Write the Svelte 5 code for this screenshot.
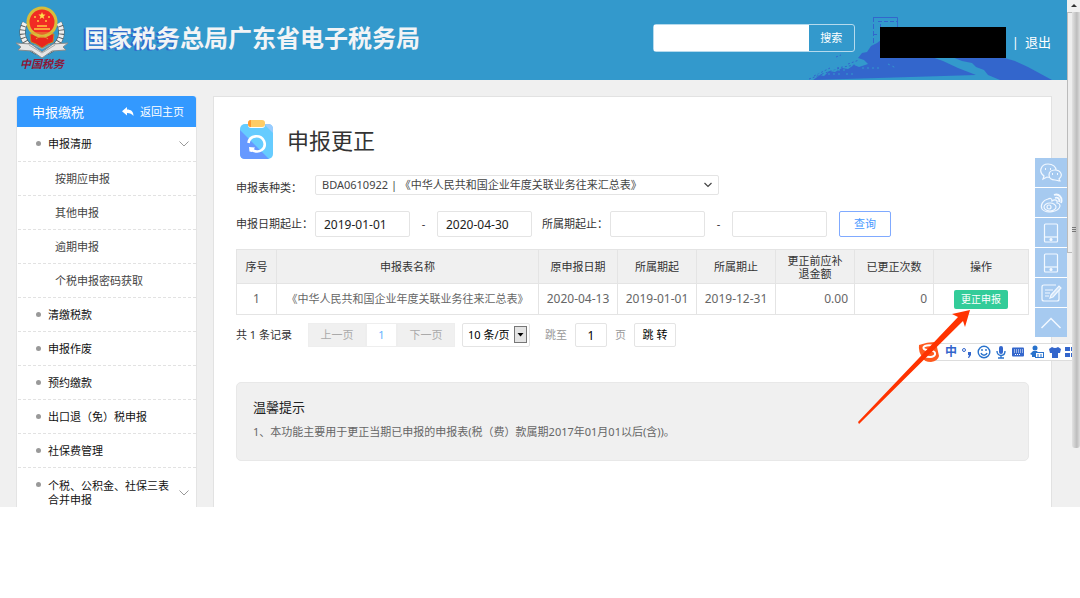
<script>
    let keyword = $state("");
    let reportType = $state("BDA0610922");
    let declareFrom = $state("2019-01-01");
    let declareTo = $state("2020-04-30");
    let periodFrom = $state("");
    let periodTo = $state("");
    let pageSize = $state("10");
    let jumpPage = $state("1");

    const menu = [
        { name: "申报清册", open: true },
        { name: "按期应申报", sub: true },
        { name: "其他申报", sub: true },
        { name: "逾期申报", sub: true },
        { name: "个税申报密码获取", sub: true },
        { name: "清缴税款" },
        { name: "申报作废" },
        { name: "预约缴款" },
        { name: "出口退（免）税申报" },
        { name: "社保费管理" },
        { name: "个税、公积金、社保三表合并申报", open: true },
    ];

    const rows = [
        {
            name: "《中华人民共和国企业年度关联业务往来汇总表》",
            declared: "2020-04-13",
            from: "2019-01-01",
            to: "2019-12-31",
            amount: "0.00",
            count: 0,
        },
    ];

    const tools = ["微信", "微博", "手机端", "移动办税", "意见反馈", "返回顶部"];
</script>

<div class="screen">
    <div class="page">
        <header>
            <svg class="skyline" width="260" height="66" viewBox="0 0 260 66" aria-hidden="true">
                <g fill="none" stroke="#3366cc">
                    <path d="M67.500 29V3.500" stroke-dasharray="5 2" />
                    <path d="M67 3.500H91.500V14" />
                    <path d="M72 7.500h19M74.500 10v14M67 20.500h5" stroke-dasharray="4 2" />
                    <path d="M3 65l14-5M8 62l16-8M16 60l18-6M31 54l18-3M42 50l11-4M30 43l5-2" stroke-dasharray="2 2" />
                </g>
                <path fill="#3366cc" d="M7 66l7-5 4 1 5-5 6 1 7-4 6 1 6-4 5 2 9-3-4-4-6-2 4-5 5-1 4-6 6-3 4-3 12 1 26 13 10 2 14 5 15 7 18 7z" />
                <path fill="#3366cc" d="M146 43h49l14 4 13 6 24 13h-52l-12-5-4-5-8-3-4-4-10-2z" />
                <path d="M12 60h22M22 56h20M56 54h20M82 50l8 4M40 60h10" stroke="#3399cc" stroke-dasharray="2 3" />
            </svg>
            <div class="brand">
                <div class="emblem">
                    <svg width="52" height="52" viewBox="0 0 52 52" aria-hidden="true">
                        <path d="M9 17C3 28 8 39 21 46M43 17c6 11 1 22-12 29" fill="none" stroke="#555b5d" stroke-width="6" />
                        <path d="M9 17C3 28 8 39 21 46M43 17c6 11 1 22-12 29" fill="none" stroke="#eee" stroke-width="5" stroke-dasharray="3 1" />
                        <path d="M0 37l15 1 11 8 11-8 15-1-5 4 3 3-14 1-10 7-10-7-14-1 3-3z" fill="#e6e6e6" stroke="#858b8d" />
                        <path d="M14 28h24l-1 8-5 2-6 4-6-4-5-2z" fill="#e8271d" stroke="#bd8b28" />
                        <circle cx="26" cy="16" r="14" fill="#f12b24" stroke="#d8bd3a" stroke-width="3" />
                        <path d="M26 6l1 2.500h2.500l-2 2 .800 2.500-2.300-1.500-2.300 1.500.800-2.500-2-2H25z" fill="#ffdf4b" />
                        <path d="M18 11h2M32 11h2M21 15h2M29 15h2M21 20h10M18 23h16" stroke="#ffc840" stroke-width="1.600" fill="none" />
                        <path d="M15 27h22M20 33c3-3 9-3 12 0" stroke="#e0a030" fill="none" />
                        <path d="M13 39l13 8 13-8M18 39l8 4 8-4" fill="none" stroke="#a7adae" />
                    </svg>
                    <span>中国税务</span>
                </div>
                <h1><span>国家税务</span>总局广东省电子税务局</h1>
            </div>
            <form class="search">
                <input type="text" aria-label="搜索内容" bind:value={keyword} />
                <button type="button">搜索</button>
            </form>
            <div class="user">
                <span class="account"></span>
                <span>|</span>
                <a href="#logout">退出</a>
            </div>
        </header>

        <div class="body">
            <aside>
                <div class="side-title">
                    <span>申报缴税</span>
                    <a href="#home">
                        <svg width="12" height="10" viewBox="0 0 12 10" aria-hidden="true">
                            <path d="M5 0v2.500c4 0 6.500 2 6.500 6.500C10 7 8 6 5 6v2.500L0 4.200z" fill="#fff" />
                        </svg>
                        返回主页
                    </a>
                </div>
                <ul>
                    {#each menu as item}
                        <li class:sub={item.sub}>
                            <a href="#menu">{item.name}</a>
                            {#if item.open}
                                <svg width="10" height="6" viewBox="0 0 10 6" aria-hidden="true">
                                    <path d="M.5 .5L5 5 9.500 .5" fill="none" stroke="#999" />
                                </svg>
                            {/if}
                        </li>
                    {/each}
                </ul>
            </aside>

            <main>
                <div class="heading">
                    <svg width="33" height="39" viewBox="0 0 33 39" aria-hidden="true">
                        <rect y="4" width="33" height="35" rx="5" fill="#66ccff" />
                        <path d="M0 10l29 29H5q-5 0-5-5z" fill="#6699ff" />
                        <path d="M24 4h4q5 0 5 5v4z" fill="#99ccff" />
                        <path d="M8 4h17v1q0 3-3 3H11q-3 0-3-3z" fill="#fff" />
                        <rect x="8" width="17" height="7" rx="3" fill="#ffcc66" />
                        <path d="M11 0q-3 0-3 3.500T11 7z" fill="#ff9933" />
                        <path d="M8.500 23c1-8 12-9 15.500-2 3 8-5 13-12 9" fill="none" stroke="#fff" stroke-width="2.600" />
                        <path d="M9 27l6 .500-3 4.500-2.500-.500z" fill="#fff" />
                    </svg>
                    <h2>申报更正</h2>
                </div>

                <div class="filter kind">
                    <label class="lead" for="type">申报表种类：</label>
                    <div class="type">
                        <select id="type" bind:value={reportType}>
                            <option value="BDA0610922">BDA0610922 | 《中华人民共和国企业年度关联业务往来汇总表》</option>
                        </select>
                        <svg width="10" height="6" viewBox="0 0 10 6" aria-hidden="true">
                            <path d="M1.500 1L5 4.500 8.500 1" fill="none" stroke="#444" stroke-width="1.200" />
                        </svg>
                    </div>
                </div>
                <div class="filter dates">
                    <label class="lead" for="from">申报日期起止：</label>
                    <input id="from" type="text" bind:value={declareFrom} />
                    <span class="dash">-</span>
                    <input type="text" aria-label="申报日期止" bind:value={declareTo} />
                    <label class="second" for="period">所属期起止：</label>
                    <input id="period" type="text" bind:value={periodFrom} />
                    <span class="dash">-</span>
                    <input type="text" aria-label="所属期止" bind:value={periodTo} />
                    <button class="query" type="button">查询</button>
                </div>

                <table>
                    <colgroup>
                        <col class="no" />
                        <col />
                        <col class="data" />
                        <col class="data" />
                        <col class="data" />
                        <col class="data" />
                        <col class="data" />
                        <col class="action" />
                    </colgroup>
                    <thead>
                        <tr>
                            <th>序号</th>
                            <th>申报表名称</th>
                            <th>原申报日期</th>
                            <th>所属期起</th>
                            <th>所属期止</th>
                            <th>更正前应补<br />退金额</th>
                            <th>已更正次数</th>
                            <th>操作</th>
                        </tr>
                    </thead>
                    <tbody>
                        {#each rows as row, i}
                            <tr>
                                <td>{i + 1}</td>
                                <td class="name">{row.name}</td>
                                <td>{row.declared}</td>
                                <td>{row.from}</td>
                                <td>{row.to}</td>
                                <td class="num">{row.amount}</td>
                                <td class="num">{row.count}</td>
                                <td><button class="fix" type="button">更正申报</button></td>
                            </tr>
                        {/each}
                    </tbody>
                </table>

                <div class="pager">
                    <span class="total">共 {rows.length} 条记录</span>
                    <div class="pages">
                        <button type="button">上一页</button>
                        <button type="button" class="current">1</button>
                        <button type="button">下一页</button>
                    </div>
                    <div class="size">
                        <select aria-label="每页条数" bind:value={pageSize}>
                            <option value="10">10 条/页</option>
                        </select>
                        <svg width="13" height="17" viewBox="0 0 13 17" aria-hidden="true">
                            <rect x=".5" y=".5" width="12" height="16" fill="#e4e4e4" stroke="#777" />
                            <path d="M3.500 7h6l-3 3.500z" />
                        </svg>
                    </div>
                    <label for="jump">跳至</label>
                    <input id="jump" type="text" bind:value={jumpPage} />
                    <span class="unit">页</span>
                    <button class="go" type="button">跳 转</button>
                </div>

                <section class="tips">
                    <h3>温馨提示</h3>
                    <p>1、本功能主要用于更正当期已申报的申报表(税（费）款属期2017年01月01以后(含))。</p>
                </section>
            </main>
        </div>

        <nav class="tools">
            {#each tools as tool, i}
                <button type="button" aria-label={tool}>
                    <svg width="24" height="24" viewBox="0 0 24 24" fill="none" stroke="#f2f8ff" stroke-width="1.200" aria-hidden="true">
                        {#if i === 0}
                            <path d="M11 16.500l-3-.5L4 18l1-3C-1 11 2 3 9 3c5 0 8 3 8 6" />
                            <path d="M16 9c-8 0-8 10 0 10 2 0 3 1 5 1l-1-2c5-4 1-9-4-9z" />
                            <path d="M6 8h1M11 8h1M13 13h1M18 13h1" stroke-width="2" />
                        {:else if i === 1}
                            <path d="M9 8C4 9 1 14 3 18c4 5 17 3 18-3 0-2-2-3-3-3 1-3-2-4-5-2 0-3-2-3-4-2z" />
                            <ellipse cx="11" cy="16" rx="6" ry="4" />
                            <circle cx="10" cy="16" r="2" />
                            <path d="M15 4c5-2 9 3 7 8M16 7c3-1 5 1 4 4" stroke-width="1.800" />
                        {:else if i === 2 || i === 3}
                            <rect x="5.500" y="3" width="13" height="18" rx="1" />
                            <path d="M6 16h12" />
                            <circle cx="12" cy="18.500" r="1" fill="#fff" />
                        {:else if i === 4}
                            <path d="M17 4H5q-2 0-2 2v12q0 2 2 2h13q2 0 2-2V9M6 9h8M6 12h5M6 15h4" />
                            <path d="M12 14l8-9 2 2-8 9-3 1z" fill="#cce1f8" />
                        {:else}
                            <path d="M2.500 17L12 7.500l9.500 9.500" stroke-width="1.500" />
                        {/if}
                    </svg>
                </button>
            {/each}
        </nav>
    </div>

    <div class="scroll" aria-hidden="true">
        <svg width="13" height="12" viewBox="0 0 13 12"><path d="M4 7l3-3 3 3z" fill="#333" /></svg>
        <div class="track">
            <div class="inner"></div>
            <div class="outer">
                <svg width="4" height="6" viewBox="0 0 4 6"><path d="M0 .5h4M0 2.500h4M0 4.500h4" stroke="#777" /></svg>
            </div>
        </div>
    </div>

    <!-- input method bar -->
    <div class="ime">
        <svg class="sogou" width="24" height="22" viewBox="0 0 24 22" aria-hidden="true">
            <path d="M2 4q8-3 16-3l2 5 2 9q-1 5-8 6-7 0-8-4Q1 11 2 4z" fill="#ff5a1f" />
            <path d="M18 5C8 3 5 6 7 8s10 0 11 4-5 5-11 3" fill="none" stroke="#fff" stroke-width="2" />
        </svg>
        <b>中</b>
        <svg width="12" height="14" viewBox="0 0 12 14" aria-hidden="true">
            <circle cx="3" cy="5" r="1.500" fill="none" stroke="#3366cc" />
            <path d="M7 7h3v3l-2 3H7l1-3H7z" fill="#3366cc" />
        </svg>
        <svg width="14" height="14" viewBox="0 0 14 14" fill="none" stroke="#2872cc" stroke-width="1.400" aria-hidden="true">
            <circle cx="7" cy="7" r="5.800" />
            <path d="M5 4v2M9 4v2M4 8c1 3 5 3 6 0" />
        </svg>
        <svg width="12" height="14" viewBox="0 0 12 14" aria-hidden="true">
            <rect x="4" y="1" width="4" height="8" rx="2" fill="#3366cc" />
            <path d="M2 6c0 6 8 6 8 0M6 10v3M3 13h6" fill="none" stroke="#2872cc" stroke-width="1.400" />
        </svg>
        <svg width="14" height="14" viewBox="0 0 14 14" aria-hidden="true">
            <rect x="1" y="2.500" width="12" height="9" rx="1" fill="#3366cc" />
            <path d="M3 5h9M3 7h9M4 9.500h6" stroke="#fff" stroke-dasharray="1 1" />
        </svg>
        <svg width="16" height="14" viewBox="0 0 16 14" aria-hidden="true">
            <circle cx="6" cy="3" r="2.500" fill="#2872cc" />
            <path d="M1 9l3-3h4l2 3v3H3v-2z" fill="#2872cc" />
            <rect x="6.500" y="7.500" width="8" height="5" fill="#fff" stroke="#2872cc" />
            <path d="M9 9v3M12 9v3" stroke="#2872cc" />
        </svg>
        <svg width="12" height="14" viewBox="0 0 12 14" aria-hidden="true">
            <path d="M3 2q3 2 6 0l3 2-1 4H9v5H3V8H1L0 4z" fill="#3366cc" />
        </svg>
        <svg width="7" height="14" viewBox="0 0 7 14" aria-hidden="true">
            <path d="M0 2h5v4H0zM0 8h5v4H0zM6 2h1v4H6zM6 8h1v4H6z" fill="#3366cc" />
        </svg>
    </div>

    <svg class="arrow" width="114" height="114" viewBox="0 0 114 114" aria-hidden="true">
        <path d="M0 112L100 7l-6-3 18-4-5 17-2-6L1 114z" fill="#ff3300" />
    </svg>
</div>

<style>
    :global(body) {
        background: #fff;
    }

    .screen {
        position: relative;
        display: flex;
        overflow: hidden;
        font: 11px/14px "Noto Sans", "Noto Sans CJK SC", sans-serif;
        color: #333;
    }

    .screen * {
        box-sizing: border-box;
    }

    h1, h2, h3, p, ul {
        margin: 0;
        padding: 0;
        font-weight: normal;
    }

    button, input, select {
        margin: 0;
        padding: 0;
        font: inherit;
        color: inherit;
        border: 1px solid #e4e4e4;
        border-radius: 2px;
        background: #fff;
        appearance: none;
    }

    a {
        color: inherit;
        text-decoration: none;
    }

    svg {
        display: block;
        flex: none;
    }

    .page {
        position: relative;
        flex: 1;
        min-width: 0;
        background: #f0f0f0;
    }

    header {
        position: relative;
        display: flex;
        align-items: center;
        height: 80px;
        padding: 0 16px 4px;
        background: #3399cc;
        color: #fff;
    }

    .skyline {
        position: absolute;
        right: 1px;
        bottom: 0;
    }

    .brand {
        display: flex;
        align-items: center;
        gap: 16px;
        margin-right: auto;
    }

    .emblem {
        display: flex;
        flex-direction: column;
        align-items: center;
    }

    .emblem span {
        font: italic bold 11px/13px "Liberation Serif", "Noto Sans CJK SC", serif;
        color: #8d1838;
    }

    h1 {
        font-size: 24px;
        font-weight: bold;
        line-height: 32px;
        color: #f2f4f6;
        white-space: nowrap;
    }

    h1 span {
        text-shadow: -2px 1px 0 #3366cc;
    }

    .search {
        position: relative;
        display: flex;
        height: 28px;
        border: 1px solid #b5daed;
        border-radius: 3px;
    }

    .search input {
        width: 155px;
        border: 0;
        border-radius: 0;
        color: #333;
    }

    .search button {
        width: 45px;
        border: 0;
        background: transparent;
    }

    .user {
        position: relative;
        display: flex;
        align-items: center;
        gap: 6px;
        margin: 8px 0 0 25px;
        font-size: 13px;
    }

    .account {
        width: 126px;
        height: 31px;
        background: #000;
    }

    .body {
        display: flex;
        gap: 16px;
        padding: 16px 15px 0 16px;
    }

    aside {
        flex: none;
        width: 181px;
        border: 1px solid #e4e4e4;
        border-width: 0 1px;
        border-radius: 3px 3px 0 0;
        background: #fff;
    }

    .side-title {
        display: flex;
        align-items: center;
        justify-content: space-between;
        height: 31px;
        padding: 0 12px 0 15px;
        border-radius: 3px 3px 0 0;
        background: #3399ff;
        color: #fff;
        font-size: 13px;
    }

    .side-title a {
        display: flex;
        align-items: center;
        gap: 6px;
        font-size: 11px;
    }

    ul {
        list-style: none;
    }

    li {
        position: relative;
        display: flex;
        align-items: center;
        justify-content: space-between;
        height: 34px;
        margin-left: 1px;
        padding: 0 7px 0 30px;
        border-bottom: 1px dashed #e2e2e2;
        color: #111;
    }

    li:first-child {
        height: 35px;
    }

    li:last-child {
        height: 39px;
        padding-top: 11px;
        border-bottom: 0;
    }

    li:last-child a {
        width: 124px;
    }

    li::before {
        content: "";
        position: absolute;
        left: 18px;
        top: 14px;
        width: 5px;
        height: 5px;
        border-radius: 50%;
        background: #999;
    }

    li.sub {
        padding-left: 37px;
        color: #444;
    }

    li.sub::before {
        display: none;
    }

    main {
        flex: 1;
        min-width: 0;
        padding: 23px 22px 0;
        border: 1px solid #e2e2e2;
        border-bottom: 0;
        background: #fff;
    }

    .heading {
        display: flex;
        align-items: center;
        gap: 14px;
        padding-left: 4px;
    }

    h2 {
        font-size: 22px;
        line-height: 30px;
    }

    .filter {
        display: flex;
        align-items: center;
        margin-top: 16px;
    }

    .kind {
        align-items: flex-end;
    }

    .lead {
        width: 79px;
        white-space: nowrap;
    }

    .type {
        position: relative;
        width: 404px;
    }

    .type select {
        display: block;
        width: 100%;
        height: 20px;
        padding: 0 24px 0 6px;
        color: #444;
    }

    .type svg {
        position: absolute;
        right: 6px;
        top: 7px;
    }

    .dates input {
        width: 95px;
        height: 26px;
        padding: 0 8px;
        font-size: 12px;
        color: #222;
    }

    .dash {
        width: 27px;
        text-align: center;
    }

    .second {
        width: 78px;
        padding-left: 10px;
        white-space: nowrap;
    }

    .query {
        width: 52px;
        height: 26px;
        margin-left: 12px;
        border-color: #80aaff;
        color: #4a9aff;
    }

    table {
        width: 100%;
        margin-top: 12px;
        table-layout: fixed;
        border-collapse: collapse;
    }

    .no {
        width: 40px;
    }

    .data {
        width: 79px;
    }

    .action {
        width: 95px;
    }

    th, td {
        padding: 0 6px;
        border: 1px solid #e4e4e4;
        text-align: center;
        white-space: nowrap;
    }

    th {
        height: 34px;
        background: #f0f0f0;
        font-weight: normal;
        line-height: 13px;
    }

    td {
        height: 31px;
        font-size: 12px;
        color: #666;
    }

    td.name {
        font-size: 11px;
    }

    td.num {
        text-align: right;
    }

    .fix {
        width: 54px;
        height: 19px;
        border: 0;
        background: #33cc99;
        color: #fff;
        font-size: 10px;
        line-height: 19px;
        vertical-align: middle;
    }

    .pager {
        display: flex;
        align-items: center;
        height: 24px;
        margin-top: 8px;
        white-space: nowrap;
    }

    .total {
        width: 72px;
    }

    .pages {
        display: flex;
    }

    .pages button {
        width: 58px;
        height: 24px;
        border-color: #eee;
        border-radius: 0;
        background: #f0f0f0;
        color: #aaa;
    }

    .pages .current {
        width: 31px;
        background: #fff;
        color: #66b3ff;
    }

    .size {
        position: relative;
        width: 68px;
        margin: 0 15px 0 7px;
    }

    .size select {
        display: block;
        width: 100%;
        height: 24px;
        padding: 0 16px 0 5px;
        color: #000;
    }

    .size svg {
        position: absolute;
        right: 3px;
        top: 3px;
    }

    .pager label, .unit {
        color: #999;
    }

    .pager input {
        width: 32px;
        height: 24px;
        margin: 0 8px;
        text-align: center;
        font-size: 12px;
        color: #000;
    }

    .go {
        width: 42px;
        height: 24px;
        margin-left: 8px;
        color: #000;
    }

    .tips {
        height: 79px;
        margin-top: 35px;
        padding: 16px;
        border: 1px solid #e8e8e8;
        border-radius: 5px;
        background: #f0f0f0;
    }

    .tips h3 {
        font-size: 13px;
        line-height: 16px;
        color: #222;
    }

    .tips p {
        margin-top: 10px;
        color: #666;
    }

    .tools {
        position: absolute;
        right: 0;
        top: 158px;
        display: flex;
        flex-direction: column;
        gap: 1px;
        background: #fff;
    }

    .tools button {
        display: grid;
        place-items: center;
        width: 32px;
        height: 29px;
        border: 0;
        border-radius: 0;
        background: #a6caf0;
    }

    .scroll {
        display: flex;
        flex-direction: column;
        width: 13px;
        background: #f0f0f0;
    }

    .track {
        display: flex;
        flex: 1;
    }

    .inner {
        width: 5px;
        height: 241px;
        border: 1px solid #bbb;
        border-right: 0;
        background: #eee;
    }

    .outer {
        display: flex;
        align-items: center;
        flex: 1;
        height: 436px;
        border-radius: 0 0 3px 3px;
        background: linear-gradient(to right, #e2e2e2, #bdbdbd 60%, #ddd);
    }

    .ime {
        position: absolute;
        right: 8px;
        top: 343px;
        display: flex;
        align-items: center;
        gap: 4px;
        height: 18px;
        border: 1px solid #ddd;
        border-width: 1px 0;
        background: #fff;
        color: #3366cc;
    }

    .ime b {
        font-size: 12px;
    }

    .sogou {
        margin-left: -14px;
    }

    .arrow {
        position: absolute;
        right: 108px;
        top: 310px;
    }
</style>
